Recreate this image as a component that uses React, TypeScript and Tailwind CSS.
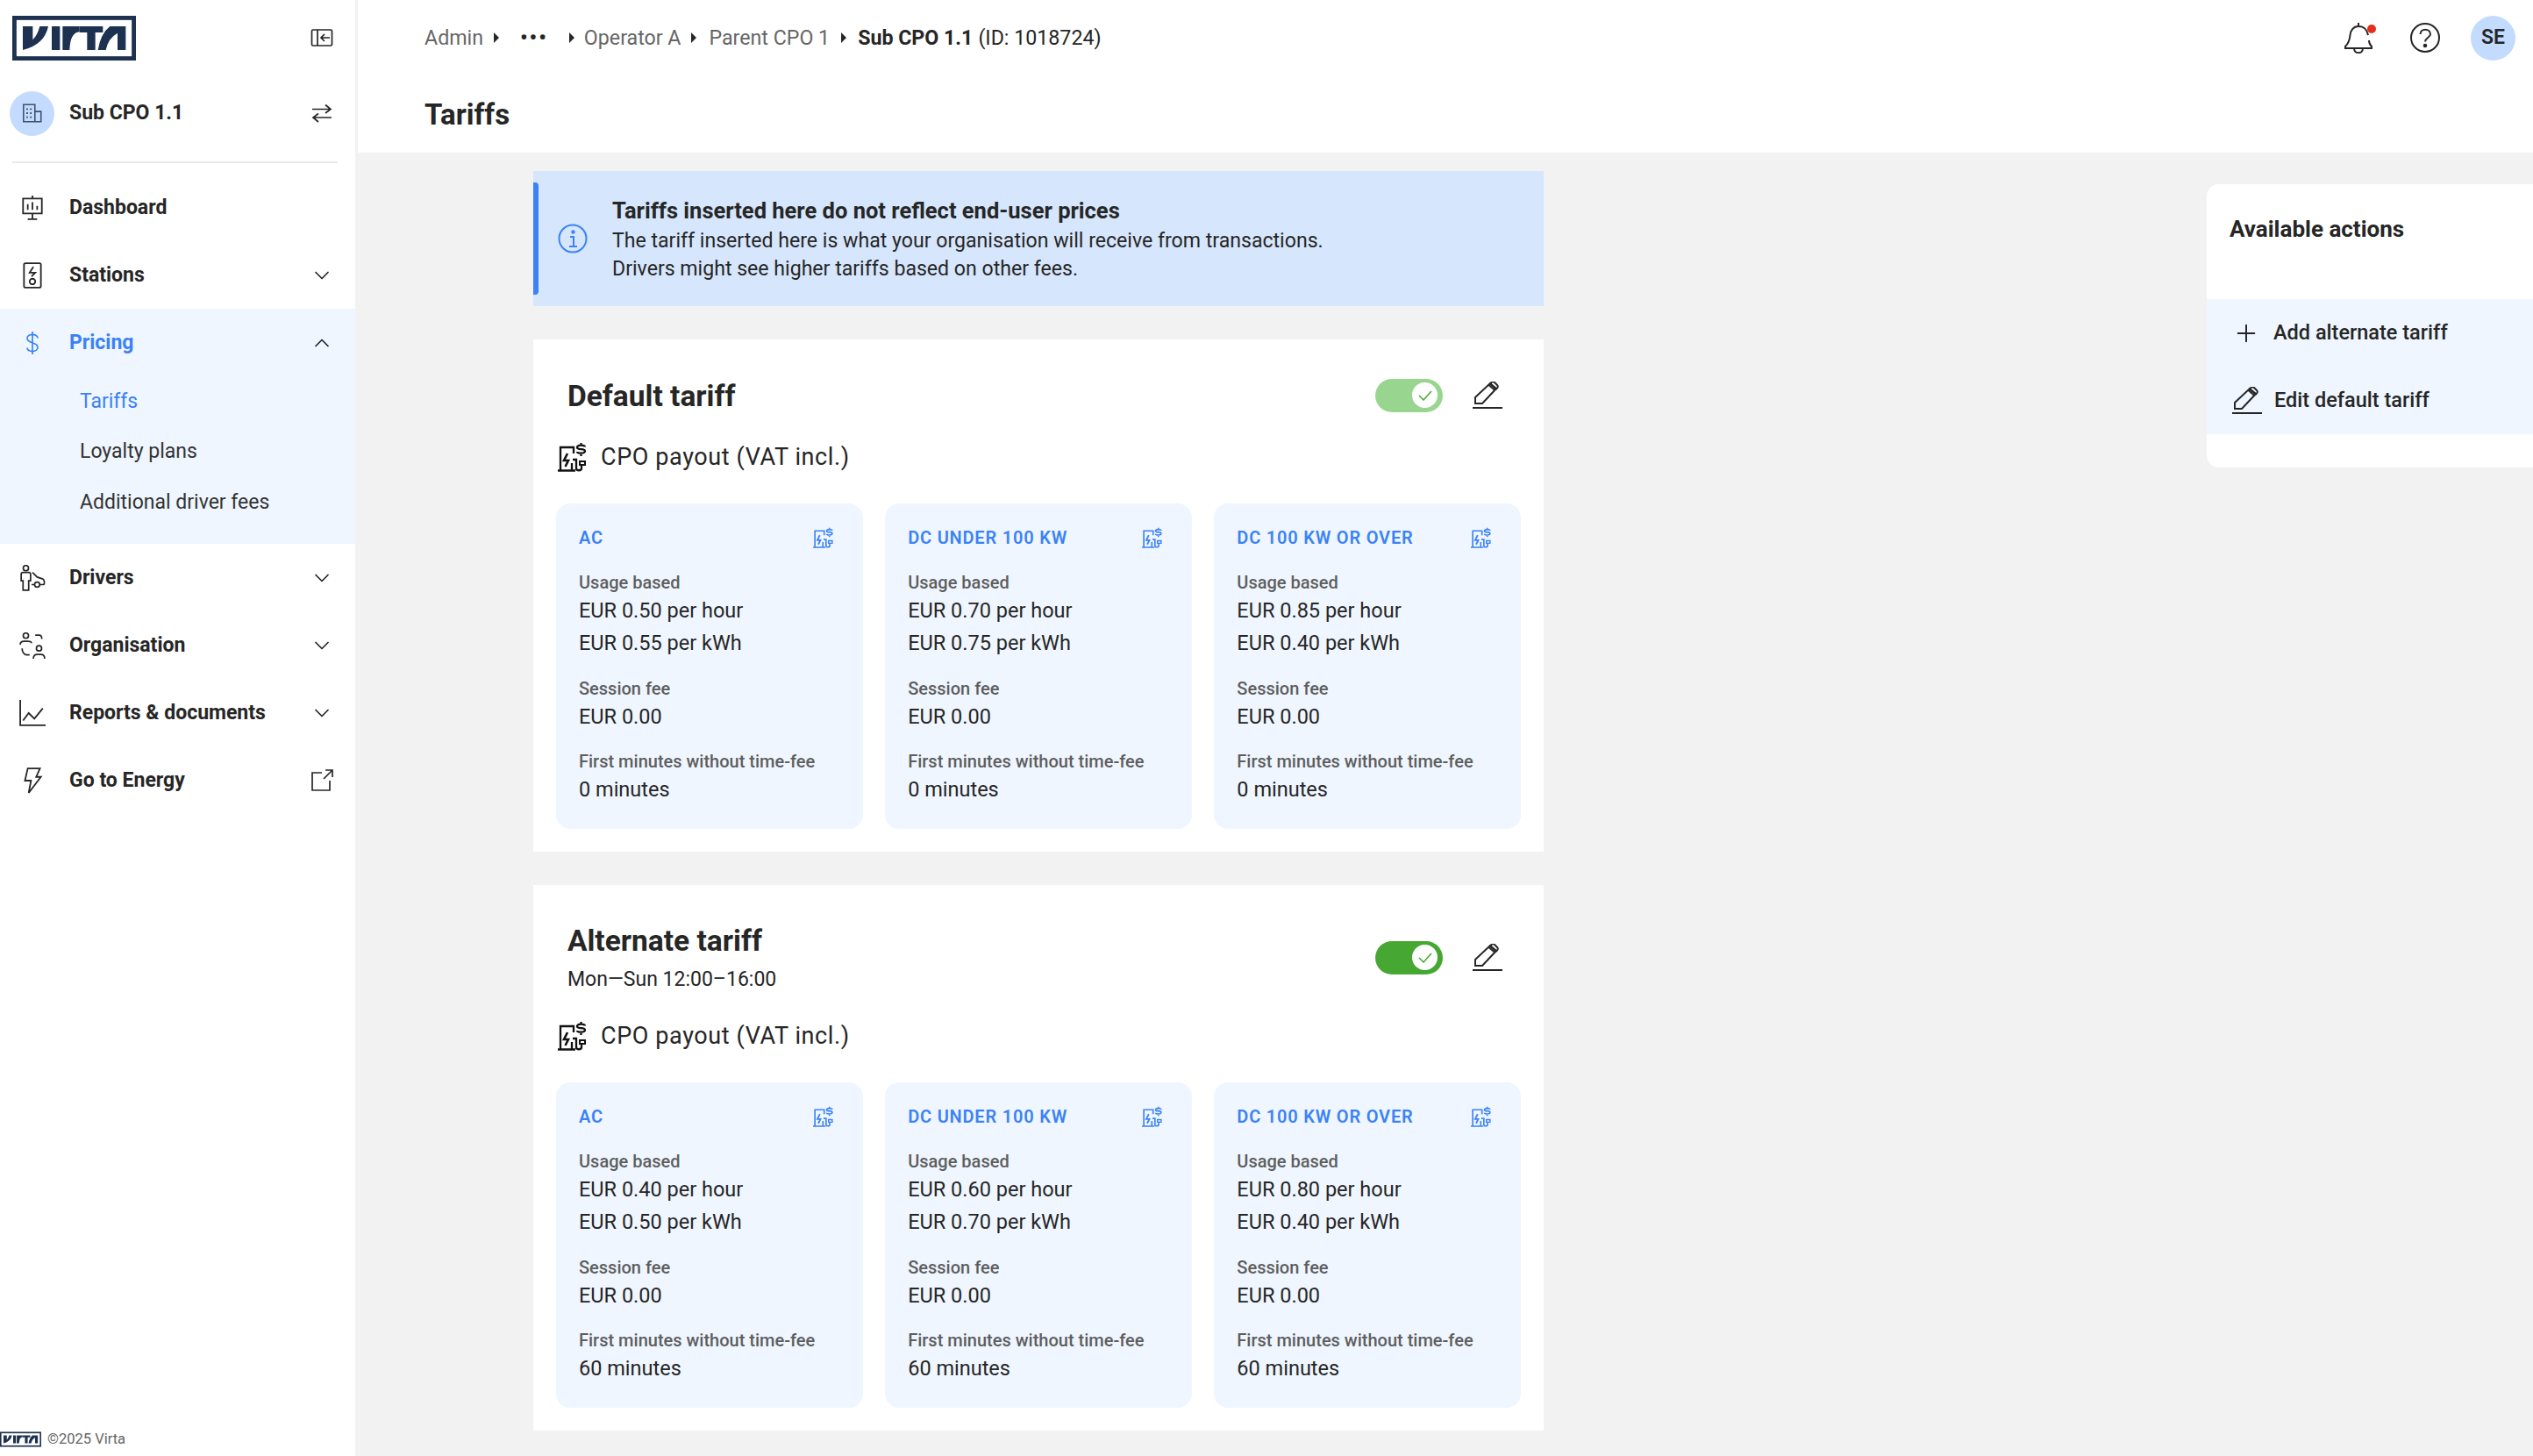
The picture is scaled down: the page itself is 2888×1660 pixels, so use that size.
import { ChevronDown, ChevronUp, Plus } from "lucide-react";

type Tier = { name: string; hour: string; kwh: string };

const defaultTiers: Tier[] = [
  { name: "AC", hour: "0.50", kwh: "0.55" },
  { name: "DC UNDER 100 KW", hour: "0.70", kwh: "0.75" },
  { name: "DC 100 KW OR OVER", hour: "0.85", kwh: "0.40" },
];

const alternateTiers: Tier[] = [
  { name: "AC", hour: "0.40", kwh: "0.50" },
  { name: "DC UNDER 100 KW", hour: "0.60", kwh: "0.70" },
  { name: "DC 100 KW OR OVER", hour: "0.80", kwh: "0.40" },
];

function Logo({ className }: { className: string }) {
  return (
    <svg viewBox="42 51 423 153" className={className}>
      <rect x="49" y="58" width="409" height="139" fill="#fff" stroke="#1d3150" strokeWidth="15" />
      <g fill="#1d3150">
        <path d="M78 87H112V133Q128 118 136 87H165Q152 150 78 168Z" />
        <rect x="177" y="87" width="28" height="81" />
        <path d="M214 87H272V106Q240 108 238 168H214Z" />
        <path d="M272 87H352V108H326V168H298V108H272Z" />
        <path d="M430 87H376Q344 112 335 168H362Q370 128 402 110V168H430Z" />
      </g>
    </svg>
  );
}

function Ico({ children, className }: { children: React.ReactNode; className: string }) {
  return (
    <svg viewBox="0 0 28 28" fill="none" stroke="currentColor" strokeWidth="1.7" className={className}>
      {children}
    </svg>
  );
}

function PayoutIcon({ className }: { className: string }) {
  return (
    <svg viewBox="0 0 34 34" fill="none" stroke="currentColor" strokeWidth="2.3" className={className}>
      <path d="M0 32.500H20M3 32V6H18V13M16 24V32" />
      <path d="M11 13L7 21H12L8.500 28" strokeWidth="2.600" />
      <path d="M26.500 1V3M26.500 14V16M31 5.500C31 3 22 3 22 6.200C22 9.600 31 6.400 31 10.200C31 13.400 22 13.400 22 11" />
      <path d="M17 20H21V30C21 33 27 33 27 30V27" />
      <path d="M24 22H32M25 22V26H31V22" strokeWidth="2" />
    </svg>
  );
}

function PencilIcon({ className }: { className: string }) {
  return (
    <svg viewBox="0 0 34 32" fill="none" stroke="currentColor" strokeWidth="2" className={className}>
      <path d="M0 30H34" />
      <path d="M3 18L20 2L27 8L11 25H3Z" />
      <path d="M20 2.500Q23 -1 25 1L28 4Q30 6 27 8.500ZM18.500 4L25.500 10" />
    </svg>
  );
}

function NavRow({ icon, label, right }: { icon: React.ReactNode; label: string; right?: React.ReactNode }) {
  return (
    <div className="flex h-[77px] items-center pr-[24px] text-[23px] font-bold text-[#262626]">
      <div className="flex w-[79px] justify-center pr-[5px]">{icon}</div>
      <span className="flex-1 pt-[1px]">{label}</span>
      {right}
    </div>
  );
}

function Crumb({ children, dark }: { children: React.ReactNode; dark?: boolean }) {
  return <span className={dark ? "font-bold text-[#262626]" : "text-[#666]"}>{children}</span>;
}

function Caret({ className }: { className: string }) {
  return <span className={`h-0 w-0 border-y-[6px] border-l-[6px] border-y-transparent border-l-[#262626] ${className}`} />;
}

function TierCard({ tier, minutes }: { tier: Tier; minutes: string }) {
  return (
    <div className="h-[371px] w-[350px] rounded-[16px] bg-[#eff6ff] pl-[26px] pr-[33px] pt-[26px]">
      <div className="flex h-[26px] items-center justify-between">
        <span className="text-[20px] font-semibold tracking-[0.8px] text-[#3b82f6]">{tier.name}</span>
        <PayoutIcon className="h-[24px] w-[24px] text-[#3b82f6]" />
      </div>
      <div className="mt-[23px] h-[30px] text-[20px] font-medium leading-[30px] text-[#5e5e5e]">Usage based</div>
      <div className="h-[34px] text-[23.5px] leading-[34px] text-[#262626]">EUR {tier.hour} per hour</div>
      <div className="mt-[3px] h-[34px] text-[23.5px] leading-[34px] text-[#262626]">EUR {tier.kwh} per kWh</div>
      <div className="mt-[20px] h-[30px] text-[20px] font-medium leading-[30px] text-[#5e5e5e]">Session fee</div>
      <div className="h-[34px] text-[23.5px] leading-[34px] text-[#262626]">EUR 0.00</div>
      <div className="mt-[19px] h-[30px] text-[20px] font-medium leading-[30px] text-[#5e5e5e]">First minutes without time-fee</div>
      <div className="h-[34px] text-[23.5px] leading-[34px] text-[#262626]">{minutes} minutes</div>
    </div>
  );
}

function TierGrid({ tiers, minutes }: { tiers: Tier[]; minutes: string }) {
  return (
    <div className="mt-[33px] flex gap-[25.5px]">
      {tiers.map((t) => (
        <TierCard key={t.name} tier={t} minutes={minutes} />
      ))}
    </div>
  );
}

function Payout() {
  return (
    <div className="flex h-[40px] items-center gap-[15px] pl-[2px] text-[27px] tracking-[0.6px] text-[#262626]">
      <PayoutIcon className="h-[34px] w-[34px] text-[#111]" />
      <span>CPO payout (VAT incl.)</span>
    </div>
  );
}

function Toggle({ on }: { on?: boolean }) {
  return (
    <div className={`flex h-[38px] w-[77px] items-center justify-end rounded-full pr-[6px] ${on ? "bg-[#46a832]" : "bg-[#98d68f]"}`}>
      <div className="flex h-[29px] w-[29px] items-center justify-center rounded-full bg-white">
        <svg viewBox="0 0 16 12" fill="none" stroke="#46a832" strokeWidth="1.5" className="h-[12px] w-[16px]">
          <path d="M1 6L6 11L15 1" />
        </svg>
      </div>
    </div>
  );
}

export default function App() {
  return (
    <div className="flex h-[1660px] w-[2888px] overflow-hidden bg-[#f2f2f2] font-['Roboto',sans-serif]">
      <aside className="flex h-full w-[405px] flex-col bg-white">
        <div className="flex h-[86px] items-center justify-between pl-[14px] pr-[24px]">
          <Logo className="h-[51px] w-[141px]" />
          <Ico className="h-[28px] w-[28px] text-[#262626]">
            <rect x="2.5" y="5" width="23" height="18" rx="1.5" />
            <path d="M9 5V23M23 14H13M17 10L13 14L17 18" />
          </Ico>
        </div>
        <div className="flex h-[86px] items-center justify-between pl-[11px] pr-[24px]">
          <div className="flex items-center gap-[17px]">
            <div className="flex h-[51px] w-[51px] items-center justify-center rounded-full bg-[#c2dbff]">
              <Ico className="h-[26px] w-[26px] text-[#41526b]">
                <path d="M3 3.5H17V24.5H3ZM17 12H24.5V24.5H17" />
                <path d="M7.5 8V10M12 8V10M7.5 13V15M12 13V15M7.5 18V20M12 18V20" strokeWidth="2" />
              </Ico>
            </div>
            <span className="pt-[1px] text-[23px] font-bold text-[#262626]">Sub CPO 1.1</span>
          </div>
          <Ico className="h-[28px] w-[28px] text-[#262626]">
            <path d="M3 9.5H24M18 4.5L24 9.5L18 14M25 19H4M10 14.5L4 19L10 24" />
          </Ico>
        </div>
        <div className="mx-[14px] mt-[12px] h-[2px] w-[371px] bg-[#e8e8e8]" />
        <nav className="mt-[12px]">
          <NavRow
            label="Dashboard"
            icon={
              <Ico className="h-[30px] w-[30px] text-[#262626]">
                <path d="M4 4H24V20H4ZM14 1V4M14 20V26M9 26H19M9 10V16M14 8V16M19 12V16" />
              </Ico>
            }
          />
          <NavRow
            label="Stations"
            right={<ChevronDown className="h-[28px] w-[28px] text-[#262626]" strokeWidth={1.5} />}
            icon={
              <Ico className="h-[30px] w-[30px] text-[#262626]">
                <rect x="5" y="1" width="18" height="26" rx="1.5" />
                <path d="M15 5L11 11H17L13 15" />
                <circle cx="14" cy="20.5" r="3" />
              </Ico>
            }
          />
          <div className="bg-[#eff6ff] pb-[19px]">
            <div className="flex h-[77px] items-center pr-[24px] text-[23px] font-bold text-[#3b82f6]">
              <div className="flex w-[79px] justify-center pr-[5px]">
                <Ico className="h-[28px] w-[28px]">
                  <path d="M20 8.5C20 3 8 3 8 8.7C8 15 20 12.5 20 19C20 25 8 25 8 19.5M14 1V27" />
                </Ico>
              </div>
              <span className="flex-1 pt-[1px]">Pricing</span>
              <ChevronUp className="h-[28px] w-[28px] text-[#262626]" strokeWidth={1.5} />
            </div>
            <div className="pl-[91px] text-[23px] text-[#333]">
              <div className="flex h-[57px] items-center pt-[1px] text-[#3b82f6]">Tariffs</div>
              <div className="flex h-[58px] items-center pt-[1px]">Loyalty plans</div>
              <div className="flex h-[57px] items-center pt-[1px]">Additional driver fees</div>
            </div>
          </div>
          <NavRow
            label="Drivers"
            right={<ChevronDown className="h-[28px] w-[28px] text-[#262626]" strokeWidth={1.5} />}
            icon={
              <svg viewBox="0 0 28 28" fill="none" stroke="currentColor" strokeWidth="1.6" className="h-[30px] w-[30px] text-[#262626]">
                <circle cx="7" cy="3.5" r="2.8" />
                <path d="M2 10C2 8.5 3 8 4 8H10C11 8 12 8.5 12 10V17H10V27H4V17H2Z" />
                <path d="M14 8L19 13L25 15C27 16 27 20 26 21H22M16 21H13" />
                <circle cx="19" cy="21" r="2.7" />
              </svg>
            }
          />
          <NavRow
            label="Organisation"
            right={<ChevronDown className="h-[28px] w-[28px] text-[#262626]" strokeWidth={1.5} />}
            icon={
              <svg viewBox="0 0 28 28" fill="none" stroke="currentColor" strokeWidth="1.6" className="h-[30px] w-[30px] text-[#262626]">
                <circle cx="7" cy="3.5" r="2.8" />
                <path d="M1 13C1 10 3 9.5 5 9.5H9C11 9.5 13 10 13 11.5" />
                <circle cx="21" cy="17" r="2.8" />
                <path d="M15 28C15 24.5 17 23.5 19 23.5H23C25 23.5 27 24.5 27 28" />
                <path d="M17 3H21C22.5 3 24 4.5 24 7M3 17C3 20 4.5 24 8 24H11" />
              </svg>
            }
          />
          <NavRow
            label="Reports & documents"
            right={<ChevronDown className="h-[28px] w-[28px] text-[#262626]" strokeWidth={1.5} />}
            icon={
              <Ico className="h-[30px] w-[30px] text-[#262626]">
                <path d="M1 0V27H28M4 22L10 14L16 20L25 9" />
              </Ico>
            }
          />
          <NavRow
            label="Go to Energy"
            right={
              <Ico className="h-[28px] w-[28px] text-[#262626]">
                <path d="M14 5H3V25H23V14M16 12L26 2M18 2H26V10" />
              </Ico>
            }
            icon={
              <Ico className="h-[30px] w-[30px] text-[#262626]">
                <path d="M9 1H22L18 10H23L10 27L12.5 14H6Z" />
              </Ico>
            }
          />
        </nav>
        <div className="mt-auto flex items-center gap-[7px] pb-[10px] text-[16.5px] leading-[18px] text-[#666]">
          <Logo className="h-[18px] w-[47px]" />
          <span>©2025 Virta</span>
        </div>
      </aside>

      <div className="ml-[3px] flex-1">
        <header className="h-[174px] bg-white pl-[76px] pr-[20px]">
          <div className="flex h-[86px] items-center">
            <div className="flex flex-1 items-center pt-[1px] text-[23.2px]">
              <Crumb>Admin</Crumb>
              <Caret className="ml-[12px]" />
              <span className="ml-[24px] text-[24px] font-bold leading-none tracking-[2px] text-[#262626]">•••</span>
              <Caret className="ml-[24px]" />
              <span className="ml-[11px]"><Crumb>Operator A</Crumb></span>
              <Caret className="ml-[12px]" />
              <span className="ml-[14px]"><Crumb>Parent CPO 1</Crumb></span>
              <Caret className="ml-[13px]" />
              <span className="ml-[13px]"><Crumb dark>Sub CPO 1.1</Crumb></span>
              <span className="ml-[6px] text-[#262626]">(ID: 1018724)</span>
            </div>
            <div className="relative mr-[42px]">
              <svg viewBox="0 0 34 36" fill="none" stroke="#262626" strokeWidth="2" className="h-[36px] w-[34px]">
                <path d="M17 1V5M28 15C27 9 23 5 17 5C11 5 8 10 7.500 15C7 21 6 24 2 28V30H32V28C30 26 29 24 29 21" />
                <path d="M12 30C12 37 22 37 22 30" />
              </svg>
              <span className="absolute right-[-3px] top-[3px] h-[10px] w-[10px] rounded-full bg-[#e62e1e]" />
            </div>
            <svg viewBox="0 0 34 34" fill="none" stroke="#262626" strokeWidth="2" className="mr-[35px] h-[34px] w-[34px]">
              <circle cx="17" cy="17" r="16" />
              <path d="M11.500 13C11.500 6 23 6 23 13C23 17 17 17 17 21.500" />
              <circle cx="17" cy="26" r="1.300" fill="#262626" />
            </svg>
            <div className="flex h-[51px] w-[51px] items-center justify-center rounded-full bg-[#c2dbff] text-[23px] font-semibold text-[#262626]">SE</div>
          </div>
          <h1 className="flex h-[88px] items-center pt-[2px] text-[33px] font-bold text-[#262626]">Tariffs</h1>
        </header>

        <div className="flex justify-between pl-[200px]">
          <main className="w-[1152px] pt-[21px]">
            <div className="flex h-[154px] items-center bg-[#d6e6fd]">
              <div className="my-[13px] w-[6px] self-stretch rounded-r-[4px] bg-[#3b82f6]" />
              <svg viewBox="0 0 34 34" fill="none" stroke="#3b82f6" strokeWidth="2" className="ml-[22px] h-[34px] w-[34px] shrink-0">
                <circle cx="17" cy="17" r="15.500" />
                <path d="M14 15H18V26M13 26H22" />
                <circle cx="17.500" cy="9.500" r="1.200" fill="#3b82f6" />
              </svg>
              <div className="ml-[28px] text-[#262626]">
                <div className="text-[25.5px] font-bold leading-[37px]">Tariffs inserted here do not reflect end-user prices</div>
                <div className="text-[23.1px] leading-[32px]">The tariff inserted here is what your organisation will receive from transactions.</div>
                <div className="text-[23.1px] leading-[32px]">Drivers might see higher tariffs based on other fees.</div>
              </div>
            </div>

            <section className="mt-[38px] h-[584px] bg-white px-[26px] pt-[35px]">
              <div className="flex h-[60px] items-center justify-between pl-[13px] pr-[21px]">
                <h2 className="text-[33.5px] font-bold text-[#262626]">Default tariff</h2>
                <div className="flex items-center gap-[34px] pb-[3px]">
                  <Toggle />
                  <PencilIcon className="h-[32px] w-[34px] text-[#262626]" />
                </div>
              </div>
              <div className="mt-[19px]"><Payout /></div>
              <TierGrid tiers={defaultTiers} minutes="0" />
            </section>

            <section className="mt-[38px] h-[622px] bg-white px-[26px] pt-[34px]">
              <div className="flex justify-between pl-[13px] pr-[21px]">
                <div>
                  <h2 className="flex h-[60px] items-center text-[33.5px] font-bold text-[#262626]">Alternate tariff</h2>
                  <div className="h-[28px] text-[23px] leading-[28px] text-[#262626]">Mon—Sun 12:00–16:00</div>
                </div>
                <div className="flex items-center gap-[34px] pt-[9px]">
                  <Toggle on />
                  <PencilIcon className="h-[32px] w-[34px] text-[#262626]" />
                </div>
              </div>
              <div className="mt-[30px]"><Payout /></div>
              <TierGrid tiers={alternateTiers} minutes="60" />
            </section>
          </main>

          <aside className="mt-[36px] h-[323px] w-[372px] rounded-l-[14px] bg-white">
            <h3 className="flex h-[131px] items-center pb-[28px] pl-[26px] text-[26px] font-bold text-[#262626]">Available actions</h3>
            <div className="bg-[#eff6ff] text-[23.5px] font-medium text-[#262626]">
              <div className="flex h-[77px] items-center gap-[15px] pl-[29px]">
                <Plus className="h-[32px] w-[32px]" strokeWidth={1.5} />
                <span>Add alternate tariff</span>
              </div>
              <div className="flex h-[77px] items-center gap-[14px] pl-[29px]">
                <PencilIcon className="h-[32px] w-[34px] shrink-0" />
                <span>Edit default tariff</span>
              </div>
            </div>
          </aside>
        </div>
      </div>
    </div>
  );
}
